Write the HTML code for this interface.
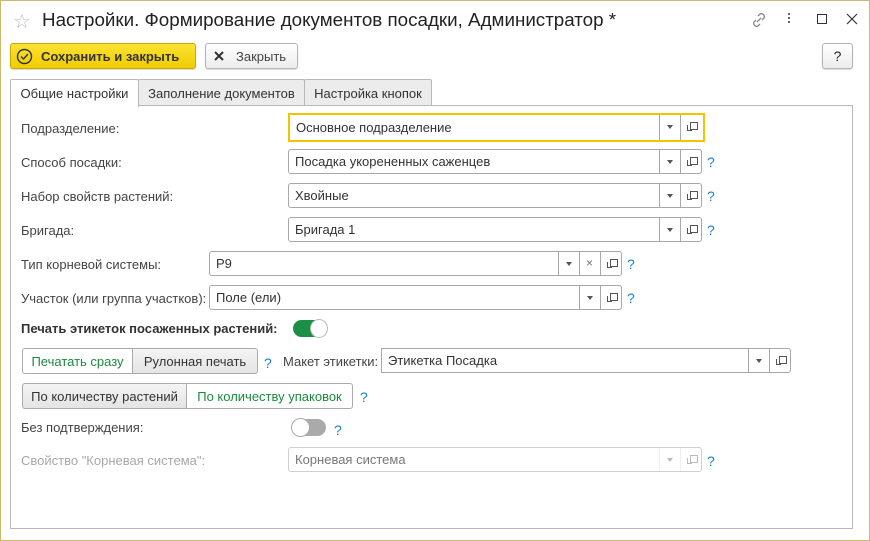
<!DOCTYPE html>
<html><head><meta charset="utf-8"><style>
*{box-sizing:border-box;margin:0;padding:0}
body{width:870px;height:541px;background:#fff;font-family:"Liberation Sans",sans-serif;font-size:13px;color:#333;position:relative;overflow:hidden}
.a{position:absolute}
.win{left:0;top:0;width:870px;height:541px;border:1px solid #cdb76e}
.btn{position:absolute;border:1px solid #b4b4b4;border-radius:3px;background:linear-gradient(#fff,#ececec);box-shadow:0 1px 1px rgba(0,0,0,.15);display:flex;align-items:center;justify-content:center;font-size:13px;color:#444}
.tab{position:absolute;top:79px;height:27px;border:1px solid #b8b8b8;border-bottom:none;background:#ececec;display:flex;align-items:center;justify-content:center;color:#333;border-radius:2px 2px 0 0}
.lbl{position:absolute;left:21px;color:#444}
.f{position:absolute;height:25px;border:1px solid #a8a8a8;border-radius:3px;background:#fff;padding-left:6px;line-height:23px;color:#333}
.dd,.cp,.xx{position:absolute;top:0;width:21px;height:100%;border-left:1px solid #a8a8a8}
.dd:after{content:"";position:absolute;left:7px;top:10px;border-left:3.5px solid transparent;border-right:3.5px solid transparent;border-top:4px solid #555}
.cp:before{content:"";position:absolute;left:9px;top:7px;width:6px;height:6px;border:1px solid #555}
.cp:after{content:"";position:absolute;left:6px;top:10px;width:4px;height:5px;border-left:1px solid #555;border-bottom:1px solid #555}
.xx:after{content:"×";position:absolute;left:6px;top:0;color:#777;font-size:12px}
.q{position:absolute;color:#1a7fc9;font-size:14px;margin-top:2px}
.seg{position:absolute;height:26px;border:1px solid #aaa;display:flex;align-items:center;justify-content:center}
</style></head><body>
<div class="a win"></div>
<div class="a" style="left:13px;top:9px;font-size:20px;color:#bbb">☆</div>
<div class="a" style="left:42px;top:9px;font-size:18.8px;color:#222">Настройки. Формирование документов посадки, Администратор *</div>
<svg class="a" style="left:750px;top:11px" width="18" height="18" viewBox="0 0 18 18" fill="none" stroke="#888" stroke-width="1.3"><path d="M8 5l2-2a3 3 0 014 4l-2 2M10 13l-2 2a3 3 0 01-4-4l2-2M7 11l4-4"/></svg>
<div class="a" style="left:788px;top:13px;width:2px;height:12px;background:repeating-linear-gradient(#666 0 2px,transparent 2px 4px)"></div>
<div class="a" style="left:817px;top:14px;width:10px;height:10px;border:1.3px solid #333"></div>
<svg class="a" style="left:846px;top:13px" width="12" height="12" viewBox="0 0 12 12" stroke="#333" stroke-width="1.2"><path d="M1 1l10 10M11 1L1 11"/></svg>

<div class="btn" style="left:10px;top:43px;width:186px;height:26px;background:linear-gradient(#fbe233,#f1cc00);border-color:#c9a800;font-weight:bold;color:#333;justify-content:flex-start;padding-left:30px">Сохранить и закрыть</div>
<svg class="a" style="left:16px;top:48px" width="17" height="17" viewBox="0 0 17 17" fill="none" stroke="#333" stroke-width="1.4"><circle cx="8.5" cy="8.5" r="7"/><path d="M5 8.5l2.5 2.5 4.5-5"/></svg>
<div class="btn" style="left:205px;top:43px;width:93px;height:26px;justify-content:flex-start;padding-left:30px">Закрыть</div>
<svg class="a" style="left:214px;top:51px" width="10" height="10" viewBox="0 0 10 10" stroke="#333" stroke-width="2"><path d="M1 1l8 8M9 1L1 9"/></svg>
<div class="btn" style="left:822px;top:43px;width:31px;height:26px;font-size:14px;color:#222">?</div>

<div class="tab" style="left:10px;width:129px;background:#fff;height:28px;z-index:2">Общие настройки</div>
<div class="tab" style="left:138px;width:167px">Заполнение документов</div>
<div class="tab" style="left:304px;width:128px">Настройка кнопок</div>
<div class="a" style="left:10px;top:105px;width:843px;height:424px;border:1px solid #b8b8b8"></div>

<div class="lbl" style="top:121px">Подразделение:</div>
<div class="f" style="left:288px;top:113px;width:417px;height:29px;border:2px solid #f2c500;border-radius:0;line-height:25px">Основное подразделение<div class="dd" style="right:23px"></div><div class="cp" style="right:0;width:23px"></div></div>

<div class="lbl" style="top:155px">Способ посадки:</div>
<div class="f" style="left:288px;top:149px;width:414px">Посадка укорененных саженцев<div class="dd" style="right:21px"></div><div class="cp" style="right:0"></div></div>
<div class="q" style="left:707px;top:152px">?</div>

<div class="lbl" style="top:189px">Набор свойств растений:</div>
<div class="f" style="left:288px;top:183px;width:414px">Хвойные<div class="dd" style="right:21px"></div><div class="cp" style="right:0"></div></div>
<div class="q" style="left:707px;top:186px">?</div>

<div class="lbl" style="top:223px">Бригада:</div>
<div class="f" style="left:288px;top:217px;width:414px">Бригада 1<div class="dd" style="right:21px"></div><div class="cp" style="right:0"></div></div>
<div class="q" style="left:707px;top:220px">?</div>

<div class="lbl" style="top:257px">Тип корневой системы:</div>
<div class="f" style="left:209px;top:251px;width:413px">Р9<div class="dd" style="right:42px"></div><div class="xx" style="right:21px"></div><div class="cp" style="right:0"></div></div>
<div class="q" style="left:627px;top:254px">?</div>

<div class="lbl" style="top:291px">Участок (или группа участков):</div>
<div class="f" style="left:209px;top:285px;width:413px">Поле (ели)<div class="dd" style="right:21px"></div><div class="cp" style="right:0"></div></div>
<div class="q" style="left:627px;top:288px">?</div>

<div class="lbl" style="top:321px;font-weight:bold;color:#333">Печать этикеток посаженных растений:</div>
<div class="a" style="left:293px;top:320px;width:34px;height:17px;border-radius:9px;background:#1b8f45"></div>
<div class="a" style="left:310px;top:319px;width:18px;height:19px;border-radius:50%;background:#fff;border:1px solid #bbb"></div>

<div class="seg" style="left:22px;top:348px;width:111px;border-radius:3px 0 0 3px;background:#fff;color:#1c8a3c">Печатать сразу</div>
<div class="seg" style="left:132px;top:348px;width:126px;border-radius:0 3px 3px 0;background:linear-gradient(#f4f4f4,#e4e4e4)">Рулонная печать</div>
<div class="q" style="left:264px;top:353px">?</div>
<div class="a" style="left:283px;top:354px;color:#444">Макет этикетки:</div>
<div class="f" style="left:381px;top:348px;width:410px;border-radius:0 3px 3px 0">Этикетка Посадка<div class="dd" style="right:21px"></div><div class="cp" style="right:0"></div></div>

<div class="seg" style="left:22px;top:383px;width:165px;border-radius:3px 0 0 3px;background:linear-gradient(#f4f4f4,#e4e4e4)">По количеству растений</div>
<div class="seg" style="left:186px;top:383px;width:167px;border-radius:0 3px 3px 0;background:#fff;color:#1c8a3c">По количеству упаковок</div>
<div class="q" style="left:360px;top:387px">?</div>

<div class="lbl" style="top:420px">Без подтверждения:</div>
<div class="a" style="left:292px;top:419px;width:34px;height:17px;border-radius:9px;background:#aaa"></div>
<div class="a" style="left:291px;top:418px;width:19px;height:19px;border-radius:50%;background:#fff;border:1px solid #aaa"></div>
<div class="q" style="left:334px;top:420px">?</div>

<div class="lbl" style="top:453px;color:#a8a8a8">Свойство "Корневая система":</div>
<div class="f" style="left:288px;top:447px;width:414px;border-color:#d0d0d0;color:#777">Корневая система<div class="dd" style="right:21px;border-color:#d8d8d8;opacity:.4"></div><div class="cp" style="right:0;border-color:#d8d8d8;opacity:.4"></div></div>
<div class="q" style="left:707px;top:451px">?</div>
</body></html>
